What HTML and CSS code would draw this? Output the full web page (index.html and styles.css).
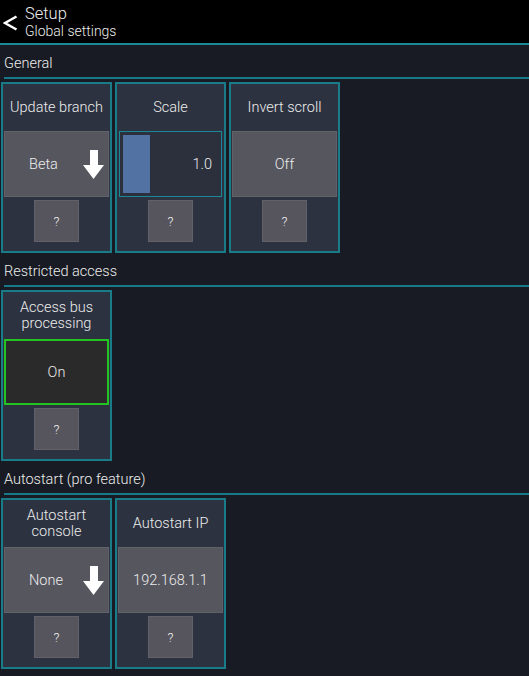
FILE: index.html
```html
<!DOCTYPE html>
<html>
<head>
<meta charset="utf-8">
<link rel="stylesheet" href="styles.css">
</head>
<body>
<header class="topbar">
  <svg class="back" width="15" height="16" viewBox="0 0 15 16"><polyline points="13.5,1.5 2,8 13.5,14.5" fill="none" stroke="#fff" stroke-width="2.4"/></svg>
  <div class="titles">
    <div class="t1">Setup</div>
    <div class="t2">Global settings</div>
  </div>
</header>

<section>
  <div class="label">General</div>
  <div class="cards">
    <div class="card">
      <div class="ctitle">Update branch</div>
      <div class="btn sel"><span>Beta</span>
        <svg class="arrow" width="21" height="29" viewBox="0 0 21 29"><rect x="7" y="0" width="8" height="16" fill="#fff"/><polygon points="0,15 21,15 10.5,29" fill="#fff"/></svg>
      </div>
      <div class="help">?</div>
    </div>
    <div class="card">
      <div class="ctitle">Scale</div>
      <div class="slider"><div class="bar"></div><span>1.0</span></div>
      <div class="help">?</div>
    </div>
    <div class="card">
      <div class="ctitle">Invert scroll</div>
      <div class="btn">Off</div>
      <div class="help">?</div>
    </div>
  </div>
</section>

<section>
  <div class="label">Restricted access</div>
  <div class="cards">
    <div class="card">
      <div class="ctitle">Access bus<br>processing</div>
      <div class="btn on">On</div>
      <div class="help">?</div>
    </div>
  </div>
</section>

<section>
  <div class="label">Autostart (pro feature)</div>
  <div class="cards">
    <div class="card">
      <div class="ctitle">Autostart<br>console</div>
      <div class="btn sel"><span>None</span>
        <svg class="arrow" width="21" height="29" viewBox="0 0 21 29"><rect x="7" y="0" width="8" height="16" fill="#fff"/><polygon points="0,15 21,15 10.5,29" fill="#fff"/></svg>
      </div>
      <div class="help">?</div>
    </div>
    <div class="card">
      <div class="ctitle">Autostart IP</div>
      <div class="btn">192.168.1.1</div>
      <div class="help">?</div>
    </div>
  </div>
</section>
</body>
</html>
```

FILE: styles.css
```css
html, body {
  margin: 0;
  padding: 0;
  background: #181b23;
  color: #ededed;
  font-family: Roboto, "Liberation Sans", sans-serif;
  font-weight: 300;
  width: 529px;
  height: 676px;
  overflow: hidden;
}
.topbar {
  height: 43px;
  background: #000;
  border-bottom: 2px solid #1a8a98;
  display: flex;
  align-items: center;
}
.back {
  margin-left: 3px;
  margin-right: 7px;
  margin-top: 2px;
}
.titles {
  display: flex;
  flex-direction: column;
}
.t1 {
  font-size: 16.5px;
  line-height: 19px;
}
.t2 {
  font-size: 14px;
  line-height: 17px;
}
.label {
  height: 34px;
  margin-left: 4px;
  border-bottom: 2px solid #187a86;
  box-sizing: border-box;
  display: flex;
  align-items: flex-end;
  padding-bottom: 5px;
  font-size: 14.5px;
  line-height: 16px;
}
.cards {
  display: flex;
  gap: 3px;
  padding: 3px 0 0 1px;
}
.card {
  width: 111px;
  height: 171px;
  box-sizing: border-box;
  border: 2px solid #1a7c88;
  background: #2c3240;
  padding: 0 1px;
  display: flex;
  flex-direction: column;
}
.ctitle {
  height: 47px;
  display: flex;
  align-items: center;
  justify-content: center;
  text-align: center;
  font-size: 14.5px;
  line-height: 16px;
}
.btn {
  height: 66px;
  box-sizing: border-box;
  background: #56565f;
  border: 1px solid #616169;
  display: flex;
  align-items: center;
  justify-content: center;
  font-size: 14.5px;
}
.btn.sel {
  justify-content: space-between;
  padding: 0 4px 0 24px;
}
.btn.on {
  background: #2a2a2a;
  border: 2px solid #22c322;
}
.slider {
  height: 66px;
  box-sizing: border-box;
  margin: 0 1px;
  border: 1px solid #1a8896;
  background: #2b303c;
  padding: 3px;
  display: flex;
  align-items: center;
  justify-content: space-between;
  font-size: 14.5px;
}
.bar {
  width: 27px;
  align-self: stretch;
  background: #5272a3;
}
.slider span {
  margin-right: 6px;
}
.help {
  width: 45px;
  height: 42px;
  box-sizing: border-box;
  margin: 3px auto 0;
  background: #56555e;
  border: 1px solid #616169;
  display: flex;
  align-items: center;
  justify-content: center;
  font-size: 13px;
}
```
